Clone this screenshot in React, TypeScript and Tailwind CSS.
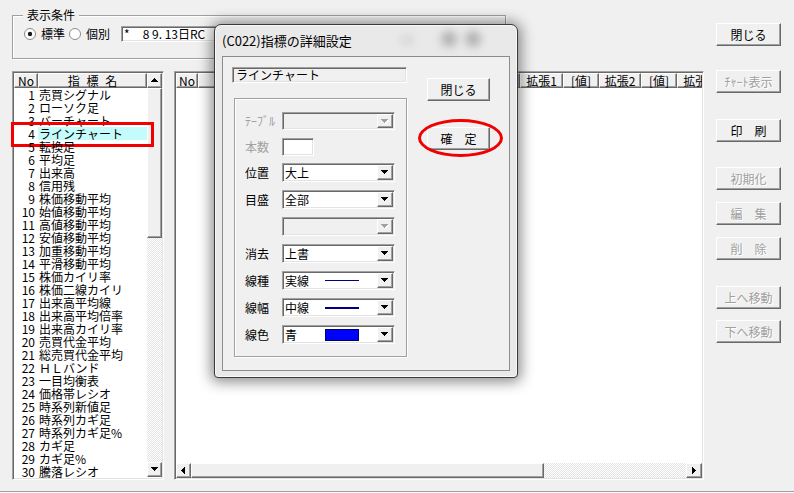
import React from "react";

const raised =
  "border border-t-white border-l-white border-r-[#696969] border-b-[#696969] shadow-[inset_-1px_-1px_0_#a0a0a0]";
const sunken =
  "border border-t-[#a0a0a0] border-l-[#a0a0a0] border-r-white border-b-white shadow-[inset_1px_1px_0_#696969,inset_-1px_-1px_0_#e3e3e3]";
const dither =
  "bg-[image:repeating-conic-gradient(#ffffff_0%_25%,#e4e4e4_0%_50%)] bg-[length:2px_2px]";

const items = [
  "売買シグナル",
  "ローソク足",
  "バーチャート",
  "ラインチャート",
  "転換足",
  "平均足",
  "出来高",
  "信用残",
  "株価移動平均",
  "始値移動平均",
  "高値移動平均",
  "安値移動平均",
  "加重移動平均",
  "平滑移動平均",
  "株価カイリ率",
  "株価二線カイリ",
  "出来高平均線",
  "出来高平均倍率",
  "出来高カイリ率",
  "売買代金平均",
  "総売買代金平均",
  "ＨＬバンド",
  "一目均衡表",
  "価格帯レシオ",
  "時系列新値足",
  "時系列カギ足",
  "時系列カギ足%",
  "カギ足",
  "カギ足%",
  "騰落レシオ",
];

const arrowPaths = {
  up: "M3 0h1v1h1v1h1v1h1v1h-7v-1h1v-1h1v-1h1z",
  down: "M0 0h7v1h-1v1h-1v1h-1v1h-1v-1h-1v-1h-1v-1h-1z",
  left: "M3 0h1v7h-1v-1h-1v-1h-1v-1h-1v-1h1v-1h1v-1h1z",
  right: "M0 0h1v1h1v1h1v1h1v1h-1v1h-1v1h-1v1h-1z",
};

function Arrow({ dir, disabled }: { dir: keyof typeof arrowPaths; disabled?: boolean }) {
  const vertical = dir === "up" || dir === "down";
  const w = vertical ? 7 : 4;
  const h = vertical ? 4 : 7;
  return (
    <svg width={w + 1} height={h + 1} viewBox={`0 0 ${w + 1} ${h + 1}`} shapeRendering="crispEdges">
      {disabled && <path d={arrowPaths[dir]} fill="#ffffff" transform="translate(1 1)" />}
      <path d={arrowPaths[dir]} fill={disabled ? "#a0a0a0" : "#000000"} />
    </svg>
  );
}

function Btn({ label, disabled, className = "" }: { label: string; disabled?: boolean; className?: string }) {
  return (
    <div
      className={`flex h-[23px] items-center justify-center bg-[#f0f0f0] text-[12px] leading-none ${raised} ${
        disabled ? "text-[#a0a0a0] [text-shadow:1px_1px_0_#fff]" : "text-black"
      } ${className}`}
    >
      {label}
    </div>
  );
}

function ScrollBtn({ dir, className = "" }: { dir: keyof typeof arrowPaths; className?: string }) {
  return (
    <div className={`flex shrink-0 items-center justify-center bg-[#f0f0f0] ${raised} ${className}`}>
      <Arrow dir={dir} />
    </div>
  );
}

function Radio({ checked }: { checked?: boolean }) {
  return (
    <svg width="12" height="12" viewBox="0 0 12 12">
      <circle cx="6" cy="6" r="5.5" fill="#ffffff" stroke="#8a8a8a" />
      {checked && <circle cx="6" cy="6" r="2.2" fill="#1a1a1a" />}
    </svg>
  );
}

function Combo({ disabled, h = "h-[19px]", children }: { disabled?: boolean; h?: string; children?: React.ReactNode }) {
  return (
    <div className={`flex ${h} w-[113px] p-[1px] ${sunken} ${disabled ? "bg-[#f0f0f0]" : "bg-white"}`}>
      <div className="flex flex-1 items-center pl-[1px] text-[12px] leading-none">{children}</div>
      <div className={`flex w-[16px] items-center justify-center bg-[#f0f0f0] ${raised}`}>
        <Arrow dir="down" disabled={disabled} />
      </div>
    </div>
  );
}

function Row({ label, dim, className = "", children }: { label: string; dim?: boolean; className?: string; children: React.ReactNode }) {
  return (
    <div className={`flex items-center ${className}`}>
      <span className={`w-[37px] text-[12px] leading-none ${dim ? "text-[#a0a0a0]" : "text-black"}`}>{label}</span>
      {children}
    </div>
  );
}

function HeadCell({ label = "", className = "" }: { label?: string; className?: string }) {
  return (
    <div className={`flex h-[15px] shrink-0 items-center justify-center bg-[#f0f0f0] text-[12px] leading-none ${raised} ${className}`}>
      {label}
    </div>
  );
}

export default function App() {
  return (
    <div className="relative h-[493px] w-[794px] overflow-hidden bg-[#f0f0f0] font-['Noto_Sans_CJK_JP','Noto_Sans',sans-serif] text-black">
      <div className="flex h-[491px] pl-[12px]">
        {/* main column */}
        <div className="flex w-[692px] flex-col">
          {/* 表示条件 */}
          <div className="relative mt-[15px] h-[44px] w-[494px] border border-[#a0a0a0] shadow-[inset_1px_1px_0_#fff,1px_1px_0_#fff]">
            <span className="absolute left-[10px] top-[-9px] bg-[#f0f0f0] px-[4px] text-[12px] leading-[16px]">表示条件</span>
            <div className="mt-[10px] flex h-[16px] items-center pl-[11px] text-[12px] leading-none">
              <Radio checked />
              <span className="ml-[5px]">標準</span>
              <span className="ml-[4px]">
                <Radio />
              </span>
              <span className="ml-[5px]">個別</span>
              <div className={`ml-[11px] flex h-[16px] w-[300px] items-center bg-white pl-[2px] ${sunken}`}>
                <span>*</span>
                <span className="ml-[13px] whitespace-pre">8 9. 13日RC</span>
              </div>
            </div>
          </div>

          <div className="mt-[12px] flex gap-[10px]">
            {/* indicator list */}
            <div className={`flex h-[409px] w-[152px] bg-white p-[1px] ${sunken}`}>
              <div className="flex w-[133px] flex-col">
                <div className="flex">
                  <HeadCell label="No" className="w-[24px]" />
                  <HeadCell label="指 標 名" className="flex-1 [word-spacing:4px]" />
                </div>
                {items.map((name, i) => (
                  <div key={name} className="relative flex h-[13px] items-center text-[12px] leading-none">
                    <span className="w-[21px] text-right">{i + 1}</span>
                    <span className={`ml-[3px] flex h-[13px] flex-1 items-center pl-[1px] ${i === 3 ? "bg-[#c4fcfc]" : ""}`}>
                      {name}
                    </span>
                    {i === 3 && (
                      <div className="absolute left-[-3px] top-[-5px] h-[25px] w-[143px] border-[3px] border-[#f00000]" />
                    )}
                  </div>
                ))}
              </div>
              <div className="flex w-[15px] flex-col">
                <ScrollBtn dir="up" className="h-[15px]" />
                <div className={`h-[150px] bg-[#f0f0f0] ${raised}`} />
                <div className={`flex-1 ${dither}`} />
                <ScrollBtn dir="down" className="h-[15px]" />
                <div className="h-px" />
              </div>
            </div>

            {/* settings grid */}
            <div className={`flex h-[409px] w-[530px] flex-col bg-white p-[1px] ${sunken}`}>
              <div className="flex overflow-hidden">
                <HeadCell label="No" className="w-[22px]" />
                <HeadCell className="w-[120px]" />
                <HeadCell className="w-[60px]" />
                <HeadCell className="w-[40px]" />
                <HeadCell className="w-[50px]" />
                <HeadCell className="w-[52px]" />
                <HeadCell label="拡張1" className="w-[43px]" />
                <HeadCell label="[値]" className="w-[36px]" />
                <HeadCell label="拡張2" className="w-[42px]" />
                <HeadCell label="[値]" className="w-[36px]" />
                <HeadCell label="拡張3" className="w-[43px]" />
              </div>
              <div className="flex-1" />
              <div className="flex h-[15px]">
                <ScrollBtn dir="left" className="w-[15px]" />
                <div className={`w-[353px] bg-[#f0f0f0] ${raised}`} />
                <div className={`flex-1 ${dither}`} />
                <ScrollBtn dir="right" className="w-[16px]" />
              </div>
            </div>
          </div>
        </div>

        {/* right buttons */}
        <div className="ml-[12px] flex w-[65px] flex-col pt-[23px]">
          <Btn label="閉じる" />
          <Btn label="ﾁｬｰﾄ表示" disabled className="mt-[24px]" />
          <Btn label="印　刷" className="mt-[26px]" />
          <Btn label="初期化" disabled className="mt-[25px]" />
          <Btn label="編　集" disabled className="mt-[12px]" />
          <Btn label="削　除" disabled className="mt-[12px]" />
          <Btn label="上へ移動" disabled className="mt-[26px]" />
          <Btn label="下へ移動" disabled className="mt-[11px]" />
        </div>
      </div>
      <div className="h-px bg-[#a0a0a0]" />
      <div className="h-px bg-white" />

      {/* dialog */}
      <div className="absolute left-[214px] top-[24px] flex h-[354px] w-[304px] flex-col rounded-t-[7px] rounded-b-[4px] border border-[#3a3a3a] bg-[#e9e9e9] shadow-[0_1px_14px_3px_rgba(0,0,0,0.45),inset_0_0_0_1px_#f8f8f8]">
        <div className="relative flex h-[31px] items-center pl-[7px] text-[13px] leading-none">
          (C022)指標の詳細設定
          <div className="absolute left-[184px] top-[8px] h-[14px] w-[16px] rounded-full bg-[#d8d8d8] opacity-70 blur-[3px]" />
          <div className="absolute left-[226px] top-[6px] h-[16px] w-[16px] rounded-full bg-[#8e8e8e] opacity-60 blur-[4px]" />
          <div className="absolute left-[250px] top-[6px] h-[16px] w-[16px] rounded-full bg-[#8e8e8e] opacity-60 blur-[4px]" />
        </div>
        <div className="mx-[7px] flex h-[315px] border border-[#8c8c8c] bg-[#f0f0f0] pl-[9px] pt-[10px]">
          <div className="flex w-[175px] flex-col">
            <div className={`flex h-[16px] items-center bg-[#f0f0f0] pl-[3px] text-[12px] leading-none ${sunken}`}>
              ラインチャート
            </div>
            <div className="ml-[2px] mt-[15px] flex h-[259px] w-[173px] flex-col border border-[#a0a0a0] pl-[10px] pt-[13px] shadow-[inset_1px_1px_0_#fff,1px_1px_0_#fff]">
              <Row label="ﾃｰﾌﾞﾙ" dim>
                <Combo disabled h="h-[18px]" />
              </Row>
              <Row label="本数" dim className="mt-[8px]">
                <div className={`h-[18px] w-[32px] bg-white ${sunken}`} />
              </Row>
              <Row label="位置" className="mt-[7px]">
                <Combo>大上</Combo>
              </Row>
              <Row label="目盛" className="mt-[8px]">
                <Combo>全部</Combo>
              </Row>
              <Row label="" className="mt-[8px]">
                <Combo disabled />
              </Row>
              <Row label="消去" className="mt-[8px]">
                <Combo>上書</Combo>
              </Row>
              <Row label="線種" className="mt-[8px]">
                <Combo>
                  <span className="w-[40px]">実線</span>
                  <span className="h-px w-[34px] bg-[#000080]" />
                </Combo>
              </Row>
              <Row label="線幅" className="mt-[8px]">
                <Combo>
                  <span className="w-[40px]">中線</span>
                  <span className="h-[2px] w-[34px] bg-[#000080]" />
                </Combo>
              </Row>
              <Row label="線色" className="mt-[8px]">
                <Combo>
                  <span className="w-[40px]">青</span>
                  <span className="h-[12px] w-[34px] border border-[#000060] bg-[#0000ff]" />
                </Combo>
              </Row>
            </div>
          </div>
          <div className="ml-[20px] flex w-[63px] flex-col">
            <Btn label="閉じる" className="mt-[11px]" />
            <div className="relative mt-[26px]">
              <Btn label="確　定" className="border-b-[#303030] border-r-[#303030]" />
              <div className="absolute left-[-9px] top-[-8px] h-[38px] w-[85px] rounded-[50%] border-[3px] border-[#f00000]" />
            </div>
          </div>
        </div>
      </div>
    </div>
  );
}
